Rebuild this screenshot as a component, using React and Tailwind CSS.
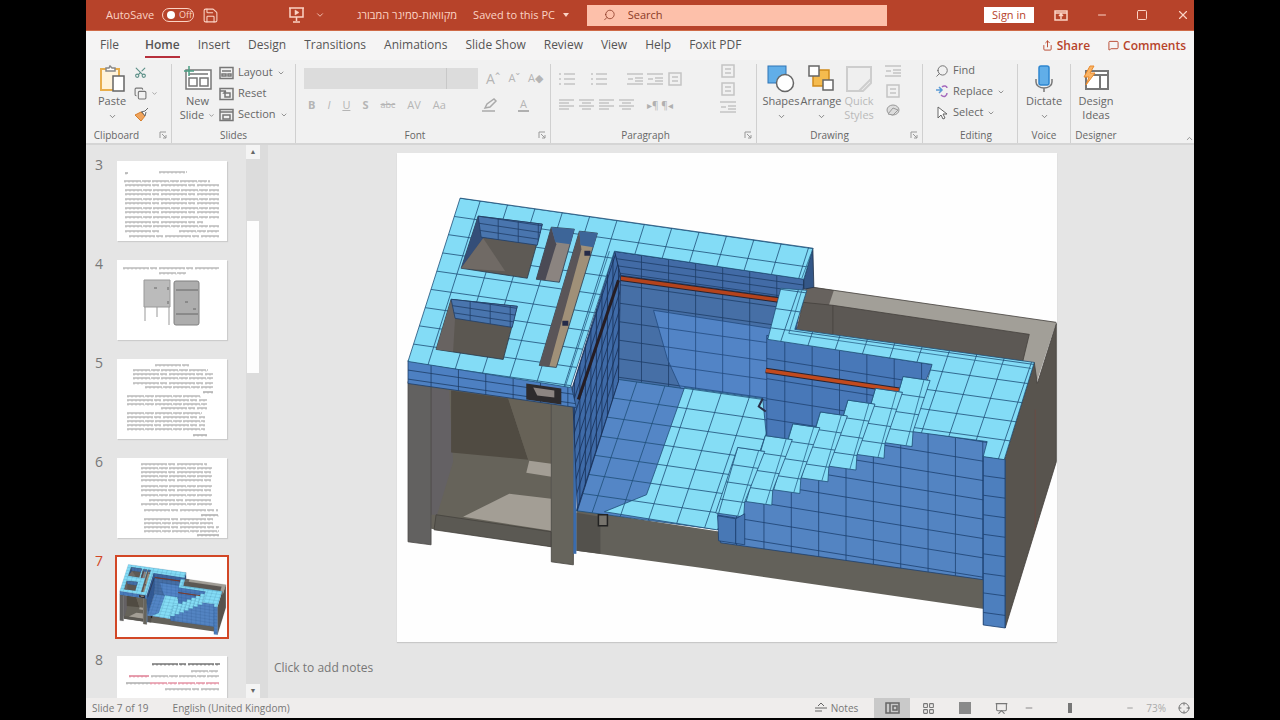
import { ChevronDown, ChevronUp, Minus, Square, X, Search, Scissors, Copy, Save, Presentation, Share, MessageSquare, LayoutGrid, Crosshair } from 'lucide-react';

const toPoints = (pts) => pts.map((p) => p.join(',')).join(' ');

// A flat face with tile lines running along u and v, clipped to its outline
const Face = ({ id, pts, fill, o, u, v, n = 16, line = '#1f4f78', width = 0.8 }) => {
  let d = '';
  for (let i = -n; i <= n; i++) {
    d += `M${o[0] + i * u[0] - n * v[0]} ${o[1] + i * u[1] - n * v[1]}L${o[0] + i * u[0] + n * v[0]} ${o[1] + i * u[1] + n * v[1]}`;
    d += `M${o[0] + i * v[0] - n * u[0]} ${o[1] + i * v[1] - n * u[1]}L${o[0] + i * v[0] + n * u[0]} ${o[1] + i * v[1] + n * u[1]}`;
  }
  return (
    <g>
      <clipPath id={id}>
        <polygon points={toPoints(pts)} />
      </clipPath>
      <polygon points={toPoints(pts)} fill={fill} />
      <path d={d} clipPath={`url(#${id})`} stroke={line} strokeWidth={width} fill="none" />
      <polygon points={toPoints(pts)} fill="none" stroke={line} strokeWidth="0.8" />
    </g>
  );
};

const Poly = ({ pts, fill, stroke }) => (
  <polygon points={toPoints(pts)} fill={fill} stroke={stroke} strokeWidth="0.8" />
);

const steps = [0, 1, 2, 3, 4, 5, 6];

const PoolModel = ({ prefix, className }) => (
  <svg viewBox="397 154 659 488" className={className} role="img" aria-label="Pool model">
    <rect x="397" y="154" width="659" height="488" fill="#fefefe" />

    {/* concrete shell behind the ledge */}
    <Poly pts={[[806, 287], [1055, 323], [1035, 384], [795, 350]]} fill="#a29f98" />
    <Poly pts={[[806, 287], [833, 291], [828, 306], [798, 304]]} fill="#67625e" />
    <Poly pts={[[802, 303], [832, 306], [1028, 335], [1021, 364], [795, 336]]} fill="#5c5854" stroke="#45413d" />
    <path d="M832 306V336M812 288L1055 323" stroke="#45413d" strokeWidth="0.8" />
    <Poly pts={[[1033, 363], [1036, 384], [1055, 324], [1055, 462], [1004, 628], [1003, 460]]} fill="#58544e" stroke="#45413d" />
    <path d="M1034 410V530" stroke="#6e4a42" strokeWidth="0.8" />

    {/* equipment room */}
    <Poly pts={[[431, 386], [551, 404], [551, 547], [431, 529]]} fill="#66635a" />
    <Poly pts={[[431, 388], [449, 391], [453, 462], [437, 515], [431, 515]]} fill="#646164" />
    <Poly pts={[[451, 391], [508, 399], [528, 460], [451, 453]]} fill="#504b42" />
    <Poly pts={[[508, 399], [551, 405], [551, 464], [528, 460]]} fill="#676257" />
    <Poly pts={[[529, 461], [551, 464], [551, 477], [526, 473]]} fill="#a39e95" />
    <Poly pts={[[463, 517], [509, 494], [551, 499], [551, 531]]} fill="#a39e95" />
    <Poly pts={[[436, 515], [551, 532], [551, 547], [434, 530]]} fill="#5b5953" stroke="#45423d" />
    <Poly pts={[[408, 382], [431, 386], [431, 545], [408, 542]]} fill="#626160" stroke="#4b4946" />
    <Poly pts={[[576, 510], [720, 532], [983, 576], [983, 609], [700, 568], [576, 551]]} fill="#63615a" />
    <Poly pts={[[576, 513], [600, 517], [600, 554], [576, 551]]} fill="#53514c" />
    <Poly pts={[[551, 403], [574, 406], [573, 565], [551, 562]]} fill="#66645c" stroke="#45423d" />
    <path d="M574.500 400V554" stroke="#3a6cae" strokeWidth="3" />

    {/* back wall */}
    <Face id={`${prefix}-back`} fill="#466fa6" pts={[[614, 252], [804, 280], [782, 410], [618, 382]]} o={[641, 307]} u={[27, 3.8]} v={[0, 18.500]} line="#1e3d66" />
    <Face id={`${prefix}-lit`} fill="#5284c6" pts={[[653, 311], [782, 331], [782, 410], [681, 391], [667, 360]]} o={[641, 307]} u={[27, 3.8]} v={[0, 18.500]} line="#234b80" />
    <Face id={`${prefix}-lip`} fill="#426ba6" pts={[[614, 252], [804, 280], [800, 301], [620, 276]]} o={[641, 256]} u={[27, 3.8]} v={[0, 7]} line="#1e3d66" />
    <path d="M620 279L780 301" stroke="#2a2430" strokeWidth="5.500" />
    <path d="M620 279L780 301" stroke="#b5431c" strokeWidth="3.500" />

    {/* pool floor */}
    <Face id={`${prefix}-floor`} fill="#5486c6" pts={[[618, 380], [775, 402], [775, 500], [718, 530], [576, 511]]} o={[714, 413]} u={[28, 4]} v={[-6.500, 19]} />
    <Face id={`${prefix}-sun`} fill="#85ddf5" pts={[[684, 388], [762, 399], [766, 440], [760, 500], [716, 530], [604, 512], [646, 495], [655, 470]]} o={[714, 413]} u={[28, 4]} v={[-6.500, 19]} />

    {/* inner left wall */}
    <Face id={`${prefix}-left`} fill="#3f6ba8" pts={[[614, 252], [620, 276], [618, 382], [577, 511], [572, 388]]} o={[618, 280]} u={[-5.500, 17]} v={[0, 17]} n={24} line="#182f56" />
    <path d="M618 281L578 400" stroke="#251d24" strokeWidth="3" />

    {/* side wall under the ledge */}
    <Face id={`${prefix}-side`} fill="#4878b8" pts={[[766, 336], [932, 364], [920, 392], [800, 440], [766, 440]]} o={[784, 362]} u={[27.300, 4.300]} v={[0, 20]} line="#1f4272" />
    <path d="M765 371L900 391" stroke="#2a2430" strokeWidth="5.500" />
    <path d="M765 371L900 391" stroke="#c24a1e" strokeWidth="3.500" />
    <path d="M762 399l-4 8 7 5" fill="none" stroke="#2a2f48" strokeWidth="2" />

    {/* front wall and corner column */}
    <Face id={`${prefix}-front`} fill="#5384c2" pts={[[717, 513], [900, 430], [986, 440], [983, 580], [720, 543]]} o={[927, 472]} u={[27.300, 4.400]} v={[0, 19.300]} line="#1d4170" />
    <Face id={`${prefix}-column`} fill="#4d7fbe" pts={[[982, 456], [1004, 460], [1004, 628], [982, 625]]} o={[982, 476]} u={[22, 3]} v={[0, 19.500]} line="#1d4170" />

    {/* ledge */}
    <Face id={`${prefix}-ledge`} fill="#83dcf6" pts={[[780, 289], [806, 291], [794, 330], [1033, 363], [1003, 460], [982, 457], [986, 442], [911, 432], [931, 365], [767, 340]]} o={[975, 357]} u={[27.300, 3.800]} v={[-6.500, 19]} />
    <path d="M801 291L788 334L1030 369" stroke="#2a668c" strokeWidth="0.8" fill="none" />

    {/* stairs */}
    {steps.map((k) => {
      const x = 902 - 27.500 * k;
      const y = 377 + 11.800 * k;
      const bx = 911 - 28 * k;
      const by = 447 + 11.700 * k;
      return (
        <g key={k}>
          <Face
            id={`${prefix}-step${k}`}
            fill="#86def6"
            pts={[[x, y], [x + 27, y + 4], [bx + 1, by - 15], [bx, by], [bx - 28, by - 4]]}
            o={[x, y]}
            u={[28, 4]}
            v={[-5, 17.300]}
          />
          <path d={`M${x + 21} ${y + 3}L${bx - 6} ${by - 1}`} stroke="#2a668c" strokeWidth="0.8" />
        </g>
      );
    })}
    <Poly pts={[[717, 516], [735, 519], [744, 514], [744, 545], [718, 541]]} fill="#4878b5" stroke="#1d4170" />
    <path d="M735 519V544" stroke="#1d4170" />

    {/* deck */}
    <Face id={`${prefix}-edge`} fill="#4d80c2" pts={[[408, 361], [571, 387], [576, 408], [408, 384]]} o={[431, 374]} u={[27.300, 4]} v={[0, 9]} line="#1e3d66" />
    <Poly pts={[[812, 249], [813, 288], [803, 290], [803, 280]]} fill="#345788" stroke="#1e3047" />
    <Face id={`${prefix}-deck`} fill="#83dcf6" pts={[[460, 199], [812, 249], [803, 280], [614, 252], [570, 388], [408, 362]]} o={[480, 202]} u={[27.300, 3.900]} v={[-5.800, 18.200]} />
    <path d="M609 252L565 387M810 255L801 279" stroke="#2a668c" strokeWidth="0.8" />

    {/* deck openings */}
    <Poly pts={[[478, 217], [542, 225], [527, 279], [461, 269]]} fill="#5e5a55" stroke="#263b50" />
    <Poly pts={[[478, 217], [483, 239], [461, 269]]} fill="#344e78" />
    <Poly pts={[[483, 239], [505, 272], [461, 269]]} fill="#706a65" />
    <Face id={`${prefix}-o1`} fill="#4975ae" pts={[[478, 217], [542, 225], [537, 246], [481, 238]]} o={[498, 227]} u={[20, 3]} v={[0, 7]} line="#213e68" />
    <Poly pts={[[451, 300], [517, 307], [503, 360], [436, 350]]} fill="#5b5751" stroke="#263b50" />
    <Poly pts={[[451, 300], [455, 318], [453, 352], [436, 350]]} fill="#686361" />
    <Face id={`${prefix}-o2`} fill="#4975ae" pts={[[451, 300], [517, 307], [512, 328], [455, 319]]} o={[470, 309]} u={[20, 3]} v={[0, 7]} line="#213e68" />
    <Poly pts={[[551, 228], [574, 230], [559, 283], [536, 280]]} fill="#8b8480" stroke="#263b50" />
    <Poly pts={[[551, 228], [556, 245], [545, 281], [536, 280]]} fill="#4b4a55" />
    <Poly pts={[[551, 228], [574, 230], [570, 245], [555, 243]]} fill="#3d6598" />
    <Poly pts={[[579, 232], [597, 234], [556, 368], [539, 366]]} fill="#a09078" stroke="#263b50" />
    <Poly pts={[[579, 232], [581, 250], [549, 367], [539, 366]]} fill="#5a5558" />
    <Poly pts={[[579, 232], [597, 234], [593, 248], [580, 246]]} fill="#3d6598" />
    <path d="M584 254h6M562 324h6" stroke="#252b48" strokeWidth="5" />

    {/* skimmer and drain */}
    <Poly pts={[[526, 384], [561, 389], [561, 405], [526, 400]]} fill="#2e2b2d" />
    <Poly pts={[[533, 388], [554, 391], [554, 398], [537, 396]]} fill="#8d8582" />
    <rect x="598" y="515" width="9" height="11" fill="#77746d" stroke="#222" strokeWidth="1.500" />
  </svg>
);

// Text lines of the small slides: [x, y, width]
const thumbs = [
  {
    no: 3,
    lines: [[42, 11, 28], [7, 20, 86], [8, 24, 94], [8, 29, 94], [8, 33, 94], [8, 38, 94], [8, 42, 94], [8, 47, 94], [8, 51, 94], [8, 56, 94], [8, 61, 78], [8, 65, 94], [8, 70, 34], [62, 70, 40], [12, 75, 90], [8, 12, 3]]
  },
  { no: 4, lines: [[6, 8, 96], [42, 13, 28]], shapes: true },
  {
    no: 5,
    lines: [[38, 6, 36], [16, 11, 75], [16, 15, 80], [16, 19, 80], [16, 24, 80], [28, 28, 68], [86, 33, 10], [10, 37, 74], [10, 41, 80], [10, 45, 80], [44, 49, 46], [10, 54, 75], [10, 58, 78], [10, 62, 78], [10, 66, 78], [10, 70, 78], [76, 76, 14]]
  },
  {
    no: 6,
    lines: [[24, 6, 66], [24, 10, 71], [24, 14, 71], [24, 18, 71], [24, 22, 71], [24, 28, 71], [24, 32, 71], [24, 37, 71], [32, 42, 63], [24, 46, 71], [27, 52, 74], [84, 57, 18], [27, 61, 69], [27, 65, 69], [27, 69, 75], [27, 73, 75], [80, 77, 22]]
  },
  { no: 7, active: true },
  { no: 8, lines: [[35, 8, 68, '#333'], [74, 15, 28], [12, 20, 20, '#d8607a'], [34, 20, 68], [9, 27, 24], [33, 27, 69, '#d8607a'], [48, 33, 54]] }
];

const Thumb = ({ thumb }) => (
  <li className="flex items-start gap-3">
    <span className={`w-[10px] text-sm leading-4 -mt-1 ${thumb.active ? 'text-[#d24726]' : 'text-[#777]'}`}>{thumb.no}</span>
    <button
      aria-label={`Slide ${thumb.no}`}
      className={`block h-20 w-[110px] bg-white ${thumb.active ? 'outline-2 outline-[#d24726]' : 'shadow-[1px_1px_1px_#ccc]'}`}
    >
      {thumb.active ? (
        <PoolModel prefix="mini" className="h-full w-full" />
      ) : (
        <svg viewBox="0 0 110 80" className="h-full w-full">
          {thumb.lines.map(([x, y, w, color], i) => (
            <g key={i} stroke={color || '#9a9a9a'}>
              <path d={`M${x} ${y}h${w}`} strokeWidth="1.200" strokeDasharray={i % 2 ? '17 1 9 1' : '26 1 7 2'} />
              <path d={`M${x} ${y + 1}h${w}`} strokeWidth="1" strokeDasharray="2 2" opacity="0.4" />
            </g>
          ))}
          {thumb.shapes && (
            <g>
              <path d="M27 20h26v27H27zM28 47v14M40 47v10M52 47v18" fill="#bbb" stroke="#999" />
              <rect x="57" y="21" width="25" height="44" rx="2" fill="#adadad" stroke="#808080" />
              <path d="M37 28h3M51 27v3M51 41v3M68 42h3M76 49h3M59 30h22M59 54h22" stroke="#666" />
            </g>
          )}
        </svg>
      )}
    </button>
  </li>
);

const Group = ({ label, className, launcher, children }) => (
  <section aria-label={label} className={`relative flex shrink-0 flex-col border-r border-[#d0d0d0] ${className}`}>
    <div className="flex flex-1 items-start">{children}</div>
    <div className={`text-center text-[10px] leading-4 text-[#666] ${launcher ? 'pr-6' : ''}`}>{label}</div>
    {launcher && (
      <button aria-label={`${label} options`} className="absolute right-1 bottom-1">
        <svg width="8" height="8" viewBox="0 0 8 8" fill="none" stroke="#999"><path d="M1 7V1h6M3 3l4 4M7 4v3H4" /></svg>
      </button>
    )}
  </section>
);

const SmallButton = ({ icon, children, arrow }) => (
  <button className="flex h-[21px] items-center gap-1 text-[11px] whitespace-nowrap text-[#666]">
    {icon}
    {children}
    {arrow && <ChevronDown size={8} />}
  </button>
);

const SlideIcon = ({ kind }) => (
  <svg width="15" height="14" viewBox="0 0 15 14" fill="none" stroke="#777" strokeWidth="1.500">
    <rect x="1" y="1.500" width="13" height="11" />
    {kind === 'layout' && <path d="M3 5h9M3 8h4v2H3zM9 8h3v2H9z" />}
    {kind === 'reset' && <path d="M1 4h6M6 6v4h5V6H5l2-2" />}
    {kind === 'section' && <path d="M1 4h13M4 7h7v4H4z" />}
  </svg>
);

const LinesIcon = ({ kind }) => (
  <svg width="16" height="14" viewBox="0 0 16 14" fill="none" stroke="#c4c4c4" strokeWidth="1.500">
    {kind === 'list' && <path d="M0 2h2M0 7h2M0 12h2M5 2h11M5 7h11M5 12h11" />}
    {kind === 'indent' && <path d="M0 2h16M8 6h8M8 9h8M0 12h16M1 7h5" />}
    {kind === 'left' && <path d="M0 2h15M0 5h10M0 8h15M0 11h10" />}
    {kind === 'center' && <path d="M0 2h15M3 5h9M0 8h15M3 11h9" />}
    {kind === 'box' && <path d="M2 1h12v12H2zM5 5h6M5 9h6" />}
  </svg>
);

const ShapesIcon = () => (
  <svg width="28" height="28" viewBox="0 0 28 28">
    <rect x="1" y="1" width="18" height="17" fill="#61aee8" stroke="#2e75b6" />
    <circle cx="18" cy="18" r="8.500" fill="#fff" stroke="#666" strokeWidth="1.500" />
  </svg>
);

const ArrangeIcon = () => (
  <svg width="28" height="28" viewBox="0 0 28 28" strokeWidth="1.500">
    <rect x="6" y="5" width="16" height="16" fill="#f5bb4e" stroke="#cf8a1b" />
    <rect x="2" y="1" width="10" height="10" fill="#fff" stroke="#666" />
    <rect x="16" y="15" width="10" height="10" fill="#fff" stroke="#666" />
  </svg>
);

const BigButton = ({ icon, label, arrow, className }) => (
  <button className={`flex flex-col items-center text-[11px] leading-[14px] text-[#666] ${className}`}>
    <span className="flex h-[30px] items-center">{icon}</span>
    {label.map((line) => <span key={line} className="whitespace-nowrap">{line}</span>)}
    {arrow && <ChevronDown size={9} className="mt-1" />}
  </button>
);

const tabs = ['File', 'Home', 'Insert', 'Design', 'Transitions', 'Animations', 'Slide Show', 'Review', 'View', 'Help', 'Foxit PDF'];

const TitleBar = () => (
  <header className="flex h-[31px] shrink-0 items-center border-b border-[#cf6a47] bg-[#b7432a] text-[11px] text-[#fbd3c5]">
    <div className="flex w-[219px] shrink-0 items-center pl-5">
      <label className="flex items-center gap-2">
        AutoSave
        <input type="checkbox" className="sr-only" />
        <span className="flex h-[14px] w-8 items-center gap-1 rounded-full border border-[#fbd3c5] pl-1 text-[9px]">
          <span className="h-2 w-2 rounded-full bg-white" />
          Off
        </span>
      </label>
      <button aria-label="Save" className="ml-2"><Save size={17} strokeWidth={1.5} /></button>
      <button aria-label="From beginning" className="ml-auto">
        <svg width="17" height="16" viewBox="0 0 17 16" fill="none" stroke="currentColor" strokeWidth="1.500"><path d="M1 1h15M2 1v9h13V1M8.500 10v4M5 15h7" /><path d="M7 3l4 2.500L7 8z" fill="currentColor" strokeWidth="0.5" /></svg>
      </button>
    </div>
    <div className="flex w-[282px] shrink-0 items-center pl-[10px]">
      <button aria-label="Customize toolbar"><ChevronDown size={10} /></button>
      <span dir="rtl" className="ml-8 whitespace-nowrap">מקוואות-סמינר המבורג</span>
      <button className="ml-4 flex items-center gap-2 whitespace-nowrap">
        Saved to this PC
        <svg width="6" height="4" viewBox="0 0 6 4" fill="currentColor"><path d="M0 0h6L3 4z" /></svg>
      </button>
    </div>
    <label className="flex h-[21px] w-[300px] items-center gap-3 bg-[#fdc0aa] pl-4 text-[#8b3a26]">
      <Search size={14} strokeWidth={1.5} className="-scale-x-100" />
      <input aria-label="Search" placeholder="Search" className="w-full outline-none placeholder:text-[#8b3a26]" />
    </label>
    <div className="ml-auto flex items-center">
      <button className="mr-5 h-4 bg-white px-2 text-[#b7432a]">Sign in</button>
      <button aria-label="Ribbon display options" className="mr-7">
        <svg width="14" height="11" viewBox="0 0 14 11" fill="none" stroke="currentColor" strokeWidth="1.500"><path d="M1 1h12v9H1zM1 3h12M7 9V5M5 6l2-2 2 2" /></svg>
      </button>
      <button aria-label="Minimize" className="mr-7"><Minus size={12} /></button>
      <button aria-label="Maximize" className="mr-7"><Square size={12} /></button>
      <button aria-label="Close" className="mr-1"><X size={14} /></button>
    </div>
  </header>
);

const Ribbon = () => (
  <div className="flex h-[85px] shrink-0 overflow-hidden border-b-2 border-[#d5d5d5] bg-[#f1f1f1] pt-1">
    <Group label="Clipboard" launcher className="w-[86px]">
      <BigButton
        className="ml-3"
        arrow
        label={['Paste']}
        icon={
          <svg width="28" height="28" viewBox="0 0 28 28" fill="none" strokeWidth="1.500">
            <path d="M4 4h17v21H3V4z" fill="#fff3da" stroke="#e8ae4c" strokeWidth="2" />
            <path d="M8 6V3h3l1-2 2 2h3v3z" fill="#fff" stroke="#888" />
            <path d="M15 11h11v15H15z" fill="#fff" stroke="#666" />
          </svg>
        }
      />
      <div className="ml-2 flex flex-col gap-2 pt-0.5 text-[#777]">
        <button aria-label="Cut"><Scissors size={13} className="-rotate-90 text-[#5b8f87]" /></button>
        <button aria-label="Copy" className="flex items-center gap-1"><Copy size={13} /><ChevronDown size={7} /></button>
        <button aria-label="Format painter">
          <svg width="15" height="13" viewBox="0 0 15 13"><path d="M1 7l6-3 4 4-4 5z" fill="#f0a45c" stroke="#d57e2c" /><path d="M7 4l4-1 3-3M8 4l3 4 1-4" fill="#fff" stroke="#666" /></svg>
        </button>
      </div>
    </Group>
    <Group label="Slides" className="w-[124px]">
      <button className="ml-2 flex w-[35px] flex-col items-center text-[11px] leading-[14px] text-[#666]">
        <span className="flex h-[30px] items-center">
          <svg width="28" height="26" viewBox="0 0 28 26" fill="none" stroke="#777" strokeWidth="1.500"><path d="M2 4h25v19H2zM5 8h19M5 12h8v8H5zM16 12h8v8h-8z" fill="#fff" /><path d="M5 0v10M0 5h10" stroke="#4b9f84" /></svg>
        </span>
        New
        <span className="flex items-center gap-1">Slide <ChevronDown size={7} /></span>
      </button>
      <div className="-mt-0.5 ml-1 flex flex-col">
        <SmallButton icon={<SlideIcon kind="layout" />} arrow>Layout</SmallButton>
        <SmallButton icon={<SlideIcon kind="reset" />}>Reset</SmallButton>
        <SmallButton icon={<SlideIcon kind="section" />} arrow>Section</SmallButton>
      </div>
    </Group>
    <Group label="Font" launcher className="w-[255px] pl-2">
      <div className="flex w-full flex-col gap-2 pr-1 pt-1 text-[11px] text-[#b5b5b5]">
        <div className="flex items-center gap-2">
          <select aria-label="Font" disabled className="h-[21px] w-[142px] appearance-none bg-[#dcdcdc]" />
          <select aria-label="Font size" disabled className="-ml-2 h-[21px] w-8 appearance-none border-l border-[#c8c8c8] bg-[#dcdcdc]" />
          <button disabled className="text-sm leading-4">Aˆ</button>
          <button disabled>Aˇ</button>
          <button disabled>A◆</button>
        </div>
        <div className="flex items-center gap-3 pl-1 leading-4">
          <button disabled className="font-bold">B</button>
          <button disabled className="italic">I</button>
          <button disabled className="underline">U</button>
          <button disabled className="font-bold">S</button>
          <button disabled className="text-[9px] line-through">abc</button>
          <button disabled>AV</button>
          <button disabled className="mr-6">Aa</button>
          <button disabled aria-label="Highlight" className="mr-2">
            <svg width="16" height="15" viewBox="0 0 16 15" fill="none" stroke="#aaa" strokeWidth="1.500"><path d="M3 10l2-4 7-5 2 2-6 6zM0 13h13" /></svg>
          </button>
          <button disabled className="border-b-2 border-[#b0b0b0] px-0.5 leading-3">A</button>
        </div>
      </div>
    </Group>
    <Group label="Paragraph" launcher className="w-[206px] pl-2">
      <div className="flex w-full justify-between pr-5 pt-2">
        <div className="flex flex-col gap-3">
          <div className="flex gap-4">
            <LinesIcon kind="list" />
            <LinesIcon kind="list" />
            <span className="flex gap-1 pl-1">
              <LinesIcon kind="indent" />
              <LinesIcon kind="indent" />
              <LinesIcon kind="box" />
            </span>
          </div>
          <div className="flex items-center gap-1">
            <LinesIcon kind="left" />
            <LinesIcon kind="center" />
            <LinesIcon kind="left" />
            <LinesIcon kind="center" />
            <span className="ml-2 text-[10px] leading-[14px] text-[#b0b0b0]">▸¶ ¶◂</span>
          </div>
        </div>
        <div className="-mt-2 flex flex-col gap-1">
          <LinesIcon kind="box" />
          <LinesIcon kind="box" />
          <LinesIcon kind="indent" />
        </div>
      </div>
    </Group>
    <Group label="Drawing" launcher className="w-[166px] pl-1">
      <BigButton className="w-10" label={['Shapes']} arrow icon={<ShapesIcon />} />
      <BigButton className="w-10" label={['Arrange']} arrow icon={<ArrangeIcon />} />
      <BigButton
        className="w-9 opacity-40"
        label={['Quick', 'Styles']}
        icon={<svg width="28" height="28" viewBox="0 0 28 28" fill="#eee" stroke="#999" strokeWidth="2"><path d="M2 2h24v16l-8 8H2zM14 26l12-12" /></svg>}
      />
      <div className="ml-2 flex flex-col gap-1.5">
        <LinesIcon kind="indent" />
        <LinesIcon kind="box" />
        <svg width="15" height="13" viewBox="0 0 15 13" fill="#ddd" stroke="#999"><ellipse cx="8" cy="6" rx="6" ry="5" /><path d="M3 10l5-6 5 2-5 5z" /></svg>
      </div>
    </Group>
    <Group label="Editing" className="w-[95px] pl-3">
      <div className="-mt-1 flex flex-col">
        <SmallButton icon={<Search size={14} className="-scale-x-100" strokeWidth={1.5} />}>Find</SmallButton>
        <SmallButton
          arrow
          icon={<svg width="14" height="14" viewBox="0 0 14 14" fill="none" strokeWidth="1.500"><path d="M1 5h5M4 2l3 3-3 3" stroke="#5b9bd5" /><path d="M6 10c3 3 6 1 6-2M7 2c2-2 5-1 5 1" stroke="#a569bd" /></svg>}
        >
          Replace
        </SmallButton>
        <SmallButton arrow icon={<svg width="14" height="14" viewBox="0 0 14 14" fill="#fff" stroke="#666"><path d="M3 1v11l3-3 2 4 2-1-2-4h4z" /></svg>}>Select</SmallButton>
      </div>
    </Group>
    <Group label="Voice" className="w-[53px]">
      <BigButton
        className="w-full"
        arrow
        label={['Dictate']}
        icon={<svg width="22" height="28" viewBox="0 0 22 28" fill="none" stroke="#777" strokeWidth="1.500"><path d="M3 14v3c0 8 16 8 16 0v-3M11 23v4" /><rect x="6" y="1" width="10" height="19" rx="2" fill="#61aee8" stroke="#2e86cf" /></svg>}
      />
    </Group>
    <section aria-label="Designer" className="flex w-[50px] shrink-0 flex-col">
      <BigButton
        className="flex-1"
        label={['Design', 'Ideas']}
        icon={<svg width="28" height="28" viewBox="0 0 28 28" fill="none" stroke="#777" strokeWidth="2"><path d="M4 6h22v18H4zM4 10h22M18 10v14" fill="#fff" /><path d="M8 1L2 12h5l-3 8 9-12H8l4-7z" fill="#f9b466" stroke="#ea8a2c" strokeWidth="1" /></svg>}
      />
      <div className="text-center text-[10px] leading-4 text-[#666]">Designer</div>
    </section>
    <button aria-label="Collapse ribbon" className="ml-auto self-end text-[#777]"><ChevronUp size={9} /></button>
  </div>
);

const StatusBar = () => (
  <footer className="flex h-5 shrink-0 items-center bg-[#efedec] pl-[6px] pr-1 text-[10px] text-[#777]">
    <span>Slide 7 of 19</span>
    <button className="ml-6">English (United Kingdom)</button>
    <div className="ml-auto flex items-center">
      <button className="flex items-center gap-1">
        <svg width="12" height="10" viewBox="0 0 12 10" stroke="#666"><path d="M0 5h12M0 8h7M3 3l3-3 3 3" fill="none" /></svg>
        Notes
      </button>
      <button aria-label="Normal view" className="ml-4 flex h-5 w-9 items-center justify-center bg-[#c9c9c9]">
        <svg width="15" height="12" viewBox="0 0 15 12" fill="none" stroke="#666" strokeWidth="1.500"><path d="M1 1h13v10H1zM5 1v10M8 4h4v4H8z" /></svg>
      </button>
      <button aria-label="Slide sorter" className="ml-3"><LayoutGrid size={13} /></button>
      <button aria-label="Reading view" className="ml-6 h-3 w-3 bg-[#8a8a8a]" />
      <button aria-label="Slide show" className="ml-6"><Presentation size={13} /></button>
      <button aria-label="Zoom out" className="ml-4"><Minus size={10} /></button>
      <input type="range" aria-label="Zoom" defaultValue="37" className="mx-1 h-3 w-[84px] appearance-none bg-transparent [&::-webkit-slider-thumb]:h-[10px] [&::-webkit-slider-thumb]:w-1 [&::-webkit-slider-thumb]:appearance-none [&::-webkit-slider-thumb]:bg-[#777]" />
      <button aria-label="Zoom in"><Minus size={8} /></button>
      <span className="ml-3 text-[#aaa]">73%</span>
      <button aria-label="Fit to window" className="ml-3"><Crosshair size={12} /></button>
    </div>
  </footer>
);

const App = () => (
  <div className="h-screen overflow-hidden bg-black px-[86px] pb-0.5 font-['Open_Sans','Noto_Sans',sans-serif]">
    <div className="flex h-full flex-col bg-[#e5e5e5]">
      <TitleBar />
      <nav className="flex h-[29px] shrink-0 items-center gap-[18px] bg-[#f5f4f4] pl-[14px] pr-2 text-xs text-[#555]">
        {tabs.map((tab) => (
          <button
            key={tab}
            className={`h-[25px] whitespace-nowrap border-b-2 ${tab === 'Home' ? 'border-[#b7303c] font-semibold' : 'border-transparent'} ${tab === 'File' ? 'mr-2' : ''}`}
          >
            {tab}
          </button>
        ))}
        <button className="ml-auto flex items-center gap-1 font-semibold text-[#b7432a]"><Share size={11} /> Share</button>
        <button className="flex items-center gap-1 font-semibold text-[#b7432a]"><MessageSquare size={11} /> Comments</button>
      </nav>
      <Ribbon />
      <div className="flex min-h-0 flex-1">
        <aside className="flex w-[182px] shrink-0 justify-between overflow-hidden">
          <ol className="flex flex-col gap-[19px] pl-[9px] pt-4">
            {thumbs.map((thumb) => <Thumb key={thumb.no} thumb={thumb} />)}
          </ol>
          <div className="flex w-[22px] flex-col items-center bg-[#dcdcdc] pr-2 text-[#666]">
            <button aria-label="Scroll up" className="flex h-[14px] w-full items-center justify-center bg-[#f4f4f4] text-[7px]">▲</button>
            <div className="mt-[62px] h-[152px] w-3 bg-[#fdfdfd]" />
            <button aria-label="Scroll down" className="mt-auto flex h-[14px] w-full items-center justify-center bg-[#f4f4f4] text-[7px]">▼</button>
          </div>
        </aside>
        <main className="flex min-w-0 flex-1 flex-col">
          <div className="flex min-h-0 flex-1 justify-center pr-2 pt-2">
            <PoolModel prefix="main" className="aspect-[659/488] h-full shadow-[0_1px_1px_#c8c8c8]" />
          </div>
          <textarea aria-label="Notes" placeholder="Click to add notes" className="h-14 shrink-0 resize-none pl-[6px] pt-[18px] text-xs outline-none placeholder:text-[#777]" />
        </main>
      </div>
      <StatusBar />
    </div>
  </div>
);

export default App;
